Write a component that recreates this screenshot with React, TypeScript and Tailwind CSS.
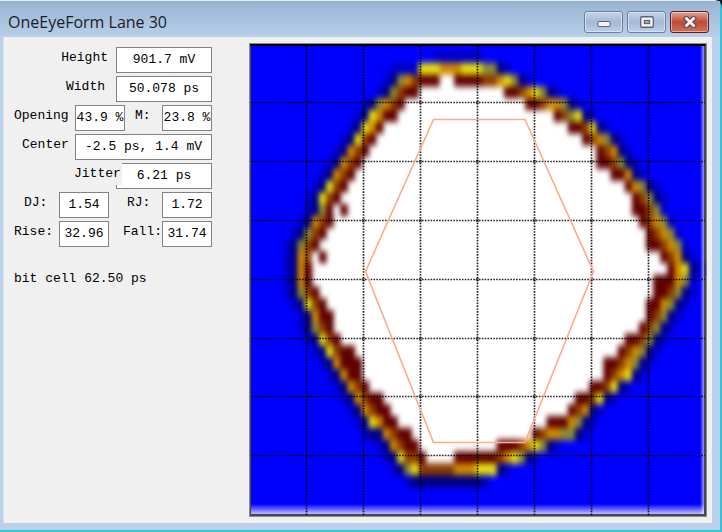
import React from 'react';

type EyeRow = [number, string, number?, string?];

const CELL_W = 7.11;
const CELL_H = 11.77;

const COLORS: Record<string, string> = {
  m: '#0000c8',
  n: '#000080',
  g: '#8c8c34',
  y: '#e8e010',
  o: '#d08c00',
  r: '#8c3c00',
  d: '#600000',
  w: '#ffffff',
};

// first column + cells of the left edge, then the same for the right edge
const EYE_ROWS: EyeRow[] = [
  [13, 'mmmmyyyoooyyyggnm'],
  [12, 'mngordddwwddddrroygnm'],
  [11, 'mngrdd', 29, 'ddroygnm'],
  [9, 'mngord', 32, 'ddroognm'],
  [8, 'mnyodd', 36, 'drgynm'],
  [7, 'mnyod', 38, 'ddrynm'],
  [6, 'mnyrd', 40, 'drognm'],
  [5, 'mnord', 42, 'dronm'],
  [4, 'mnord', 42, 'ddrgnm'],
  [3, 'mnord', 44, 'ddonm'],
  [2, 'mnyrd', 46, 'dognm'],
  [1, 'mnyrd', 47, 'drgnm'],
  [1, 'mngdwd', 47, 'ddrgm'],
  [0, 'mnord', 48, 'drogm'],
  [-1, 'mngrd', 49, 'drogm'],
  [-2, 'mngrd', 49, 'ddrogm'],
  [-2, 'mnorwd', 51, 'dronm'],
  [-2, 'mnod', 52, 'doynm'],
  [-2, 'mnod', 50, 'dddogm'],
  [-2, 'mngrd', 50, 'ddrgnm'],
  [-1, 'mnyrd', 49, 'ddognm'],
  [0, 'mnodd', 49, 'drgnm'],
  [0, 'mngrd', 48, 'drgnm'],
  [1, 'mnyrd', 46, 'ddrgnm'],
  [2, 'mnyrdd', 45, 'drognm'],
  [3, 'mnoddd', 43, 'ddrognm'],
  [4, 'mnodd', 43, 'droynm'],
  [5, 'mnord', 41, 'ddrynm'],
  [6, 'mnordd', 39, 'ddrynm'],
  [7, 'mnordd', 38, 'dronm'],
  [8, 'mnyodd', 35, 'dddognm'],
  [9, 'mnnordd', 33, 'drooggnm'],
  [11, 'mnordd', 28, 'dddroygnm'],
  [12, 'mnyrrd', 22, 'ddddddroygnm'],
  [13, 'mngyrrrrroooyyynm'],
  [15, 'mnnnnnnnnnnm'],
];

const GRID_X = [57, 114, 171, 228, 285, 342, 399];
const GRID_Y = [59, 118, 177, 236, 295, 353, 412];

const renderCells = (start: number, cells: string, row: number) =>
  cells.split('').map((c, i) => (
    <rect
      key={`${row}-${start + i}`}
      x={48.6 + (start + i) * CELL_W}
      y={20 + row * CELL_H}
      width={CELL_W + 0.6}
      height={CELL_H + 0.8}
      fill={COLORS[c]}
    />
  ));

const EyeDiagram: React.FC = () => (
  <svg viewBox="0 0 458 474" className="block w-full h-auto" role="img" aria-label="Eye diagram">
    <defs>
      <filter id="soften" x="-5%" y="-5%" width="110%" height="110%" colorInterpolationFilters="sRGB">
        <feGaussianBlur stdDeviation="2.5 3.3" />
      </filter>
      <linearGradient id="fadeDown" x1="0" y1="0" x2="0" y2="1">
        <stop offset="0" stopColor="#fff" stopOpacity="0" />
        <stop offset="1" stopColor="#fff" stopOpacity="0.75" />
      </linearGradient>
      <linearGradient id="fadeRight">
        <stop offset="0" stopColor="#fff" stopOpacity="0" />
        <stop offset="1" stopColor="#fff" stopOpacity="0.6" />
      </linearGradient>
    </defs>
    <rect width="458" height="474" fill="#8a8a8a" />
    <rect x="1" y="1" width="456" height="472" fill="#484848" />
    <rect x="1" y="1" width="455" height="2" fill="#000" />
    <rect x="2" y="3" width="453" height="468" fill="#0000ff" />

    <g filter="url(#soften)">
      {renderCells(19, 'mmmmmmm', -1)}
      {EYE_ROWS.map(([left, cells, right, rightCells], row) => (
        <g key={row}>
          {right !== undefined && (
            <rect
              x={48.6 + (left + cells.length) * CELL_W}
              y={20 + row * CELL_H}
              width={(right - left - cells.length) * CELL_W + 0.6}
              height={CELL_H + 0.8}
              fill="#fff"
            />
          )}
          {renderCells(left, cells, row)}
          {right !== undefined && rightCells && renderCells(right, rightCells, row)}
        </g>
      ))}
    </g>

    <rect x="2" y="461" width="453" height="10" fill="url(#fadeDown)" />
    <rect x="451" y="3" width="4" height="468" fill="url(#fadeRight)" />

    <g stroke="#000" strokeOpacity="0.85" strokeWidth="1.7" strokeDasharray="1.6 1.25">
      {GRID_X.map((x) => (
        <line key={x} x1={x + 0.5} x2={x + 0.5} y1="3" y2="472" />
      ))}
      {GRID_Y.map((y) => (
        <line key={y} x1="2" x2="456" y1={y + 0.5} y2={y + 0.5} />
      ))}
    </g>
    <g fill="none" stroke="#222" strokeOpacity="0.7">
      {GRID_X.map((x) => GRID_Y.map((y) => <circle key={`${x}-${y}`} cx={x + 0.5} cy={y + 0.5} r="1.5" />))}
    </g>
    <polygon points="184.5,76.5 276,76.5 344.5,228.5 276,399.5 184.5,399.5 116.5,228.5" fill="none" stroke="#ffa98c" strokeWidth="1.6" />
  </svg>
);

interface FieldProps {
  id: string;
  label: string;
  value: string;
  labelClass: string;
  inputClass: string;
}

const Field: React.FC<FieldProps> = ({ id, label, value, labelClass, inputClass }) => (
  <>
    <label htmlFor={id} className={`shrink-0 leading-[22px] whitespace-nowrap ${labelClass}`}>
      {label}
    </label>
    <input
      id={id}
      readOnly
      value={value}
      className={`h-[26px] shrink-0 border border-[#828282] bg-white p-0 pb-[2px] text-center outline-none ${inputClass}`}
    />
  </>
);

const Row: React.FC<{ children: React.ReactNode }> = ({ children }) => (
  <div className="flex items-start justify-end">{children}</div>
);

const captionButton =
  'flex h-[22px] w-[39px] items-center justify-center rounded-[3px] border shadow-[inset_0_0_0_1px_rgba(255,255,255,0.45)]';

export default function App() {
  return (
    <div className="bg-[#101820]">
      <div className="flex min-h-screen flex-col rounded-tr-lg border-t border-r-2 border-b-2 border-t-[#e4f0ee] border-r-[#35c3dc] border-b-[#35c3dc] bg-[#b9d1ea] pr-2 pb-[7px] pl-[3px]">
        <header className="flex h-9 items-start justify-between bg-linear-to-b from-[#98b3d1] to-[#b7cfe9] -mr-2 -ml-[3px] pr-[11px] pl-2">
          <h1 className="pt-[10px] font-['Open_Sans','Noto_Sans',sans-serif] text-base leading-[22px] text-[#1c1c24]">
            OneEyeForm Lane 30
          </h1>
          <div className="flex gap-1 pt-[10px]">
            <button aria-label="Minimize" className={`${captionButton} border-[#6c809e] bg-linear-to-b from-[#c3d4e8] via-[#a3bad5] to-[#b9cfe8]`}>
              <svg width="14" height="8" viewBox="0 0 14 8" className="mt-1">
                <rect x="1" y="1.5" width="12" height="5" rx="1" fill="#f4f4f4" stroke="#5b6270" />
              </svg>
            </button>
            <button aria-label="Maximize" className={`${captionButton} border-[#6c809e] bg-linear-to-b from-[#c3d4e8] via-[#a3bad5] to-[#b9cfe8]`}>
              <svg width="14" height="12" viewBox="0 0 14 12">
                <rect x="0.75" y="0.75" width="12.5" height="10.5" rx="1" fill="#f4f4f4" stroke="#5b6270" strokeWidth="1.3" />
                <rect x="4.5" y="4.5" width="5" height="3" fill="#a9c0dc" stroke="#5b6270" strokeWidth="1.3" />
              </svg>
            </button>
            <button aria-label="Close" className={`${captionButton} border-[#5a1d25] bg-linear-to-b from-[#e5a093] via-[#c04a33] to-[#cf6f58]`}>
              <svg width="14" height="12" viewBox="0 0 14 12">
                <path d="M3.5 2.5 L10.5 9.5 M10.5 2.5 L3.5 9.5" stroke="#5b4048" strokeWidth="5" strokeLinecap="square" />
                <path d="M3.5 2.5 L10.5 9.5 M10.5 2.5 L3.5 9.5" stroke="#f2eeee" strokeWidth="3" strokeLinecap="square" />
              </svg>
            </button>
          </div>
        </header>

        <main className="flex flex-1 items-start border-l border-[#dfe5ec] bg-[#f0f0f0] py-[6px] pr-[5px] pl-[10px] font-['Liberation_Mono',monospace] text-[13px] text-black">
          <section className="mr-[37px] flex w-[198px] shrink-0 flex-col gap-[3px] pt-1">
            <Row>
              <Field id="height" label="Height" value="901.7 mV" labelClass="pr-2" inputClass="w-24" />
            </Row>
            <Row>
              <Field id="width" label="Width" value="50.078 ps" labelClass="pr-[11px]" inputClass="w-24" />
            </Row>
            <Row>
              <Field id="opening" label="Opening" value="43.9 %" labelClass="w-[61px]" inputClass="w-[50px]" />
              <Field id="m" label="M:" value="23.8 %" labelClass="w-[37px] pl-[10px]" inputClass="w-[50px]" />
            </Row>
            <Row>
              <Field id="center" label="Center" value="-2.5 ps, 1.4 mV" labelClass="w-[61px] pl-2" inputClass="w-[137px]" />
            </Row>
            <Row>
              <Field
                id="jitter"
                label="Jitter"
                value="6.21 ps"
                labelClass="relative z-10 -mr-[6px] w-12 bg-[#f0f0f0]"
                inputClass="w-24"
              />
            </Row>
            <Row>
              <Field id="dj" label="DJ:" value="1.54" labelClass="w-[45px] pl-[10px]" inputClass="w-[50px]" />
              <Field id="rj" label="RJ:" value="1.72" labelClass="w-[53px] pl-[18px]" inputClass="w-[50px]" />
            </Row>
            <Row>
              <Field id="rise" label="Rise:" value="32.96" labelClass="w-[45px]" inputClass="w-[50px]" />
              <Field id="fall" label="Fall:" value="31.74" labelClass="w-[53px] pl-[14px]" inputClass="w-[50px]" />
            </Row>
            <p className="mt-[18px] leading-[22px]">bit cell 62.50 ps</p>
          </section>
          <div className="min-w-0 flex-1">
            <EyeDiagram />
          </div>
        </main>
      </div>
    </div>
  );
}
